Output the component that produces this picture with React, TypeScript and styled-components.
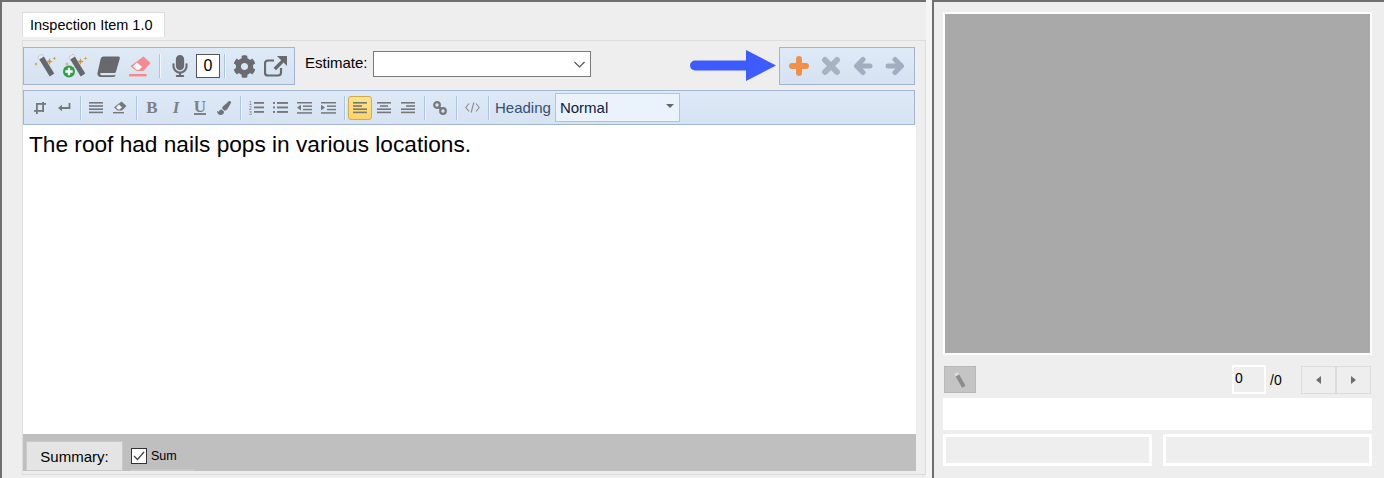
import React from 'react';
import styled, { createGlobalStyle } from 'styled-components';
import { FaCog, FaMicrophone, FaPaintBrush } from 'react-icons/fa';

const GlobalStyle = createGlobalStyle`
  html, body {
    margin: 0;
    padding: 0;
    background: #eeeeee;
    overflow: hidden;
  }
  body {
    font-family: "Liberation Sans", Arial, sans-serif;
    color: #000;
  }
`;

const Page = styled.div`
  display: flex;
  width: 1384px;
  height: 478px;
  background: #eeeeee;
`;

const LeftPane = styled.div`
  box-sizing: border-box;
  width: 926px;
  height: 100%;
  border-top: 2px solid #707070;
  border-left: 2px solid #707070;
  padding: 10px 0 0 20px;
`;

const Splitter = styled.div`
  width: 6px;
  background: #f5f5f5;
`;

const Tab = styled.div`
  box-sizing: border-box;
  display: flex;
  align-items: center;
  width: 143px;
  height: 25px;
  padding-left: 7px;
  background: #fff;
  border: 1px solid #dddddd;
  border-bottom: none;
  font-size: 14.5px;
`;

const Panel = styled.div`
  box-sizing: border-box;
  width: 904px;
  height: 435px;
  margin-top: 3px;
  padding: 6px 9px 0 0;
  border: 1px solid #dddddd;
  display: flex;
  flex-direction: column;
`;

const TopRow = styled.div`
  display: flex;
  align-items: flex-start;
  height: 38px;
  margin-right: 1px;
`;

const ToolGroup = styled.div`
  box-sizing: border-box;
  display: flex;
  align-items: center;
  height: 38px;
  padding: 0 3px;
  background: linear-gradient(#dfeaf7, #d5e2f1);
  border: 1px solid #a2b5d0;
`;

const ToolIcon = styled.span`
  display: flex;
  align-items: center;
  justify-content: center;
  width: ${p => p.$w ?? 32}px;
  color: ${p => p.$color ?? '#6a6a70'};
`;

const ToolSep = styled.span`
  width: 1px;
  height: 24px;
  margin: 0 ${p => p.$m ?? 4}px;
  background: #a9c4ea;
  box-shadow: 1px 0 0 #f3f8fe;
`;

const FormatSep = styled(ToolSep)`
  margin: 0 3px 0 4px;
`;

const Counter = styled.span`
  box-sizing: border-box;
  display: flex;
  align-items: center;
  justify-content: center;
  width: 24px;
  height: 24px;
  margin-left: 2px;
  background: #fff;
  border: 1px solid #555;
  font-size: 16px;
`;

const EstimateLabel = styled.label`
  margin: 7px 0 0 10px;
  font-size: 15px;
`;

const EstimateSelect = styled.div`
  box-sizing: border-box;
  display: flex;
  align-items: center;
  justify-content: flex-end;
  width: 218px;
  height: 26px;
  margin: 4px 0 0 5px;
  padding-right: 5px;
  background: #fff;
  border: 1px solid #7a7a7a;
`;

const Callout = styled.svg`
  display: block;
  margin: 3px 2px 0 auto;
`;

const FormatBar = styled(ToolGroup)`
  height: 35px;
  margin: 5px 1px 0 0;
  padding: 0 4px;
  background: linear-gradient(#dee9f7, #d6e3f2);
`;

const FormatButton = styled.span`
  box-sizing: border-box;
  display: flex;
  align-items: center;
  justify-content: center;
  width: 24px;
  height: 24px;
  color: #707276;
  ${p => p.$active && `
    background: linear-gradient(#ffe48a, #fdd566);
    border: 1px solid #d9a94a;
    border-radius: 3px;
  `}
`;

const LetterIcon = styled.span`
  font-family: "Liberation Serif", "Times New Roman", serif;
  font-size: 17px;
  line-height: 17px;
  font-weight: ${p => p.$bold ? 700 : 400};
  font-style: ${p => p.$italic ? 'italic' : 'normal'};
  color: #7d8187;
  ${p => p.$underline && 'border-bottom: 2px solid #7d8187; line-height: 13px;'}
`;

const HeadingLabel = styled.span`
  margin-left: 3px;
  font-size: 15px;
  color: #35506f;
`;

const HeadingSelect = styled.div`
  box-sizing: border-box;
  display: flex;
  align-items: center;
  justify-content: space-between;
  width: 125px;
  height: 29px;
  margin-left: 4px;
  padding: 0 5px 0 4px;
  background: #eaf2fc;
  border: 1px solid #b3c4da;
  font-size: 15px;
  color: #0c2240;
`;

const Caret = styled.span`
  width: 0;
  height: 0;
  margin-bottom: 3px;
  border-left: 4px solid transparent;
  border-right: 4px solid transparent;
  border-top: 4px solid #666;
`;

const Editor = styled.div`
  box-sizing: border-box;
  height: 309px;
  padding: 6px;
  background: #fff;
  font-size: 22.67px;
  line-height: 27px;
`;

const Footer = styled.div`
  box-sizing: border-box;
  display: flex;
  align-items: flex-end;
  height: 37px;
  padding-left: 3px;
  background: #bfbfbf;
`;

const SummaryButton = styled.div`
  box-sizing: border-box;
  display: flex;
  align-items: center;
  justify-content: center;
  width: 97px;
  height: 30px;
  background: #e4e4e4;
  border: 1px solid #c9c9c9;
  font-size: 15px;
`;

const SumCheck = styled.div`
  box-sizing: border-box;
  display: flex;
  align-items: center;
  gap: 4px;
  width: 63px;
  height: 23px;
  margin-left: 8px;
  padding-bottom: 5px;
  font-size: 12.5px;
  border-bottom: 2px solid #c9c9c9;
`;

const CheckBox = styled.span`
  box-sizing: border-box;
  display: flex;
  align-items: center;
  justify-content: center;
  width: 16px;
  height: 16px;
  background: #fff;
  border: 1px solid #333;
`;

const RightPane = styled.div`
  box-sizing: border-box;
  flex: 1;
  border-top: 2px solid #707070;
  border-left: 2px solid #707070;
  padding: 10px 12px 0 9px;
  display: flex;
  flex-direction: column;
`;

const Preview = styled.div`
  box-sizing: border-box;
  height: 343px;
  background: #a9a9a9;
  border: 2px solid #fff;
`;

const PagerRow = styled.div`
  display: flex;
  align-items: center;
  height: 29px;
  margin-top: 10px;
  padding: 0 1px;
`;

const WandButton = styled.span`
  box-sizing: border-box;
  display: flex;
  align-items: center;
  justify-content: center;
  width: 32px;
  height: 27px;
  background: #c4c4c4;
  border: 1px solid #b8b8b8;
`;

const PageInput = styled.span`
  box-sizing: border-box;
  width: 34px;
  height: 29px;
  margin-left: auto;
  padding: 2px 0 0 1px;
  background: #eeeeee;
  border: 2px solid #fff;
  font-size: 14px;
  line-height: 18px;
`;

const PageTotal = styled.span`
  width: 31px;
  margin-left: 4px;
  font-size: 14px;
`;

const PageButton = styled.span`
  box-sizing: border-box;
  display: flex;
  align-items: center;
  justify-content: center;
  width: 35px;
  height: 28px;
  border: 1px solid #dcdcdc;
`;

const Triangle = styled.span`
  width: 0;
  height: 0;
  border-top: 4px solid transparent;
  border-bottom: 4px solid transparent;
  ${p => p.$dir === 'left' ? 'border-right: 5px solid #6d6d6d;' : 'border-left: 5px solid #6d6d6d;'}
`;

const WhiteBar = styled.div`
  height: 32px;
  margin-top: 4px;
  background: #fff;
`;

const BoxRow = styled.div`
  display: flex;
  justify-content: space-between;
  margin-top: 4px;
`;

const OutlineBox = styled.div`
  box-sizing: border-box;
  width: 209px;
  height: 32px;
  border: 3px solid #fff;
`;

const Wand = ({ plus }: { plus?: boolean }) => (
  <svg width="26" height="26" viewBox="0 0 26 26">
    <path d="M6.740 3.970L11.260 1.030 23.260 20.530 18.740 23.470z" fill="#66666b" />
    <path d="M6.740 3.970L11.260 1.030 12.860 3.530 8.340 6.470z" fill="#e8eaee" />
    <g fill="#d8973a">
      <path d="M18.500 5l.9 2.600 2.600.9-2.600.9-.9 2.600-.9-2.600-2.600-.9 2.600-.9z" />
      <path d="M23.500 3.500l.5 1.500 1.500.5-1.500.5-.5 1.500-.5-1.500-1.500-.5 1.500-.5z" />
      <path d="M5 9l.5 1.500 1.500.5-1.500.5-.5 1.500-.5-1.500L3 11l1.500-.5z" />
    </g>
    {plus && (
      <g>
        <circle cx="7" cy="18.500" r="6" fill="#2f9e44" />
        <path d="M7 14.800v7.400M3.300 18.500h7.400" stroke="#fff" strokeWidth="2.400" />
      </g>
    )}
  </svg>
);

const BookIcon = () => (
  <svg width="23" height="21" viewBox="0 0 23 21">
    <path d="M6.500 .5h14.800c1.200 0 1.800 1 1.500 2L19 15.500c-.3 1-1 1.600-2.200 1.600H4.600c-1 0-1.600.5-1.400 1.200.2.600.8.900 1.600.9h12.600l.8-.8c.3.600.2 2.500-1.600 2.500H3.200C1 20.500.1 18.800.6 16.500L3.500 3.500C3.900 1.500 5 .5 6.500 .5z" fill="#68686d" />
  </svg>
);

const EraserIcon = () => (
  <svg width="22" height="21" viewBox="0 0 22 21">
    <path d="M14.500 .5l7 6.500L14.500 15H7.500L1.500 10z" fill="#f58a8e" />
    <path d="M4 10.200L8 6.500l5 4.600-3 2.700H7.500z" fill="#fff" />
    <rect x="0" y="18" width="17.500" height="2.400" fill="#f58a8e" />
  </svg>
);

const ShareIcon = () => (
  <svg width="23" height="21" viewBox="0 0 23 21">
    <path d="M17 12v4.500a3 3 0 0 1-3 3H4a3 3 0 0 1-3-3V7.500a3 3 0 0 1 3-3H10" fill="none" stroke="#68686d" strokeWidth="2.200" />
    <path d="M13 0h10v10l-3.400-3.400-7.600 7.600-2.400-2.400L17.200 4.200z" fill="#68686d" />
  </svg>
);

const PlusIcon = () => (
  <svg width="20" height="20" viewBox="0 0 20 20" fill="none" stroke="currentColor" strokeWidth="6" strokeLinecap="round">
    <path d="M10 3v14M3 10h14" />
  </svg>
);

const CrossIcon = () => (
  <svg width="20" height="20" viewBox="0 0 20 20" fill="none" stroke="currentColor" strokeWidth="6" strokeLinecap="round">
    <path d="M4 4l12 12M16 4L4 16" />
  </svg>
);

const BackIcon = () => (
  <svg width="20" height="20" viewBox="0 0 20 20" fill="none" stroke="currentColor" strokeWidth="5" strokeLinecap="round" strokeLinejoin="round">
    <path d="M17 10H4M10 3.500L3.500 10l6.500 6.500" />
  </svg>
);

const ForwardIcon = () => (
  <svg width="20" height="20" viewBox="0 0 20 20" fill="none" stroke="currentColor" strokeWidth="5" strokeLinecap="round" strokeLinejoin="round">
    <path d="M3 10h13M10 3.500l6.500 6.500-6.500 6.500" />
  </svg>
);

const line = '#76787c';

const Lines = ({ rows }: { rows: [number, number][] }) => (
  <svg width="14" height="12" viewBox="0 0 14 12">
    {rows.map(([x, w], i) => (
      <rect key={i} x={x} y={i * 3.2} width={w} height="1.600" fill={line} />
    ))}
  </svg>
);

const FloatIcon = () => (
  <svg width="12" height="12" viewBox="0 0 12 12" fill={line}>
    <rect x="2" y="1" width="10" height="1.800" />
    <rect x="0" y="8" width="10" height="1.800" />
    <rect x="2" y="1" width="1.800" height="11" />
    <rect x="8.200" y="0" width="1.800" height="10" />
  </svg>
);

const ReturnIcon = () => (
  <svg width="13" height="9" viewBox="0 0 13 9">
    <path d="M11.500 0v5H4" fill="none" stroke={line} strokeWidth="1.800" />
    <path d="M0 5l4-3.200v6.400z" fill={line} />
  </svg>
);

const SmallEraser = () => (
  <svg width="14" height="13" viewBox="0 0 14 13">
    <path d="M8.500 .5L13.500 5 9 9.500H4.500L1 6.300z" fill={line} />
    <path d="M3 6.300l3-2.800 3 2.800-2.400 2.200H5z" fill="#eef3fa" />
    <rect x="0" y="11" width="11" height="1.400" fill={line} />
  </svg>
);

const OrderedList = () => (
  <svg width="15" height="15" viewBox="0 0 15 15">
    <text x="0" y="5" fontSize="5" fontFamily="Liberation Sans" fill={line}>1</text>
    <text x="0" y="10" fontSize="5" fontFamily="Liberation Sans" fill={line}>2</text>
    <text x="0" y="15" fontSize="5" fontFamily="Liberation Sans" fill={line}>3</text>
    <rect x="5" y="2" width="10" height="1.800" fill={line} />
    <rect x="5" y="6.500" width="10" height="1.800" fill={line} />
    <rect x="5" y="11" width="10" height="1.800" fill={line} />
  </svg>
);

const BulletList = () => (
  <svg width="15" height="11" viewBox="0 0 15 11">
    {[0, 4.5, 9].map(y => (
      <g key={y}>
        <rect x="0" y={y} width="2" height="1.900" fill={line} />
        <rect x="4" y={y} width="11" height="1.900" fill={line} />
      </g>
    ))}
  </svg>
);

const Indent = ({ out }: { out?: boolean }) => (
  <svg width="15" height="12" viewBox="0 0 15 12">
    <rect x="0" y="0" width="15" height="1.500" fill={line} />
    <rect x="6" y="3.400" width="9" height="1.500" fill={line} />
    <rect x="6" y="6.800" width="9" height="1.500" fill={line} />
    <rect x="0" y="10.200" width="15" height="1.500" fill={line} />
    <path d={out ? 'M0 5.600l4-2.800v5.600z' : 'M4 5.600L0 2.800v5.600z'} fill={line} />
  </svg>
);

const LinkIcon = () => (
  <svg width="14" height="14" viewBox="0 0 14 14" fill="none" stroke="#76787c" strokeWidth="2.200">
    <circle cx="4" cy="4" r="2.800" />
    <circle cx="10" cy="10" r="2.800" />
    <path d="M5.500 5.500l3 3" />
  </svg>
);

const CodeIcon = () => (
  <svg width="15" height="11" viewBox="0 0 15 11" fill="none" stroke="#8a8c90" strokeWidth="1.100">
    <path d="M4 1.500L.8 5.500 4 9.500M11 1.500l3.200 4-3.200 4M8.800 .5L6.200 10.500" />
  </svg>
);

const Arrow = () => (
  <Callout width="87" height="31" viewBox="0 0 87 31">
    <path d="M5 10.500L56 10.500V0L86 15.500 56 31V20.500L5 20.500a5 5 0 0 1 0-10z" fill="#3d5bff" />
  </Callout>
);

export default function App() {
  return (
    <Page>
      <GlobalStyle />
      <LeftPane>
        <Tab>Inspection Item 1.0</Tab>
        <Panel>
          <TopRow>
            <ToolGroup>
              <ToolIcon $w={34}><Wand /></ToolIcon>
              <ToolIcon $w={28}><Wand plus /></ToolIcon>
              <ToolIcon $w={38}><BookIcon /></ToolIcon>
              <ToolIcon $w={26}><EraserIcon /></ToolIcon>
              <ToolSep $m={6} />
              <ToolIcon $w={28}><FaMicrophone size={22} /></ToolIcon>
              <Counter>0</Counter>
              <ToolSep />
              <ToolIcon $w={30}><FaCog size={23} /></ToolIcon>
              <ToolIcon $w={32}><ShareIcon /></ToolIcon>
            </ToolGroup>
            <EstimateLabel>Estimate:</EstimateLabel>
            <EstimateSelect>
              <svg width="11" height="7" viewBox="0 0 11 7" fill="none" stroke="#555" strokeWidth="1.200">
                <path d="M.5 1l5 5 5-5" />
              </svg>
            </EstimateSelect>
            <Arrow />
            <ToolGroup>
              <ToolIcon $color="#f0914a"><PlusIcon /></ToolIcon>
              <ToolIcon $color="#a8b3c2"><CrossIcon /></ToolIcon>
              <ToolIcon $color="#a1aebf"><BackIcon /></ToolIcon>
              <ToolIcon $color="#a1aebf"><ForwardIcon /></ToolIcon>
            </ToolGroup>
          </TopRow>
          <FormatBar>
            <FormatButton><FloatIcon /></FormatButton>
            <FormatButton><ReturnIcon /></FormatButton>
            <FormatSep />
            <FormatButton><Lines rows={[[0, 14], [0, 14], [0, 14], [0, 14]]} /></FormatButton>
            <FormatButton><SmallEraser /></FormatButton>
            <FormatSep />
            <FormatButton><LetterIcon $bold>B</LetterIcon></FormatButton>
            <FormatButton><LetterIcon $italic $bold>I</LetterIcon></FormatButton>
            <FormatButton><LetterIcon $bold $underline>U</LetterIcon></FormatButton>
            <FormatButton><FaPaintBrush size={14} /></FormatButton>
            <FormatSep />
            <FormatButton><OrderedList /></FormatButton>
            <FormatButton><BulletList /></FormatButton>
            <FormatButton><Indent out /></FormatButton>
            <FormatButton><Indent /></FormatButton>
            <FormatSep />
            <FormatButton $active><Lines rows={[[0, 14], [0, 9], [0, 14], [0, 14]]} /></FormatButton>
            <FormatButton><Lines rows={[[0, 14], [3, 8], [0, 14], [0, 14]]} /></FormatButton>
            <FormatButton><Lines rows={[[0, 14], [5, 9], [0, 14], [0, 14]]} /></FormatButton>
            <FormatSep />
            <FormatButton><LinkIcon /></FormatButton>
            <FormatSep />
            <FormatButton><CodeIcon /></FormatButton>
            <FormatSep />
            <HeadingLabel>Heading</HeadingLabel>
            <HeadingSelect>
              Normal
              <Caret />
            </HeadingSelect>
          </FormatBar>
          <Editor>The roof had nails pops in various locations.</Editor>
          <Footer>
            <SummaryButton>Summary:</SummaryButton>
            <SumCheck>
              <CheckBox>
                <svg width="12" height="10" viewBox="0 0 12 10" fill="none" stroke="#444" strokeWidth="1.300">
                  <path d="M1 5l3.500 3.500L11 1" />
                </svg>
              </CheckBox>
              Sum
            </SumCheck>
          </Footer>
        </Panel>
      </LeftPane>
      <Splitter />
      <RightPane>
        <Preview />
        <PagerRow>
          <WandButton>
            <svg width="16" height="18" viewBox="0 0 16 18">
              <rect x="6.500" y="3" width="4" height="14" rx="1" transform="rotate(-30 8 10)" fill="#8c8c8c" />
              <rect x="6.500" y="1" width="4" height="3" transform="rotate(-30 8 10)" fill="#dcdcdc" />
            </svg>
          </WandButton>
          <PageInput>0</PageInput>
          <PageTotal>/0</PageTotal>
          <PageButton><Triangle $dir="left" /></PageButton>
          <PageButton><Triangle $dir="right" /></PageButton>
        </PagerRow>
        <WhiteBar />
        <BoxRow>
          <OutlineBox />
          <OutlineBox />
        </BoxRow>
      </RightPane>
    </Page>
  );
}
